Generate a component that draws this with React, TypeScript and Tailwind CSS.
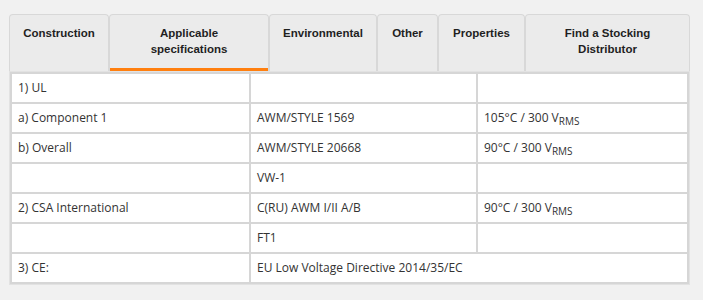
import React from "react";

const tabs = [
  { id: "construction", label: "Construction", w: "w-[100px]" },
  { id: "specs", label: "Applicable specifications", w: "w-[160px]", active: true },
  { id: "env", label: "Environmental", w: "w-[108px]" },
  { id: "other", label: "Other", w: "w-[61px]" },
  { id: "props", label: "Properties", w: "w-[87px]" },
  { id: "dist", label: "Find a Stocking Distributor", w: "w-[165px]" },
];

const Rms = ({ temp }: { temp: string }) => (
  <>
    {temp} / 300 V<sub className="text-[10px]">RMS</sub>
  </>
);

const rows: { a: string; b: string; c?: React.ReactNode; span?: boolean }[] = [
  { a: "1) UL", b: "" },
  { a: "a) Component 1", b: "AWM/STYLE 1569", c: <Rms temp="105°C" /> },
  { a: "b) Overall", b: "AWM/STYLE 20668", c: <Rms temp="90°C" /> },
  { a: "", b: "VW-1" },
  { a: "2) CSA International", b: "C(RU) AWM I/II A/B", c: <Rms temp="90°C" /> },
  { a: "", b: "FT1" },
  { a: "3) CE:", b: "EU Low Voltage Directive 2014/35/EC", span: true },
];

const App = () => {
  return (
    <div className="w-[703px] h-[300px] bg-[#f1f1f1] pt-[14px] pl-[9px]">
      <div className="w-[681px]">
        {/* Tabs */}
        <div className="flex h-[57px]">
          {tabs.map((t) => (
            <div
              key={t.id}
              className={`${t.w} shrink-0 bg-[#ebebeb] border border-b-0 border-[#d8d8d8] rounded-t-[4px] pt-[10px] px-2 text-center text-[11.5px] leading-[16px] font-bold text-[#1f1f1f] ${
                t.active ? "shadow-[inset_0_-3px_0_#ff7f0f]" : ""
              }`}
              style={{ fontFamily: '"Liberation Sans", Arial, sans-serif' }}
            >
              {t.id === "specs" ? (
                <>
                  Applicable
                  <br />
                  specifications
                </>
              ) : t.id === "dist" ? (
                <>
                  Find a Stocking
                  <br />
                  Distributor
                </>
              ) : (
                t.label
              )}
            </div>
          ))}
        </div>

        {/* Table */}
        <div className="border border-[#e2e2e2]">
          <table
            className="w-full border-collapse bg-white text-[12px] text-[#333]"
            style={{ fontFamily: '"Open Sans", sans-serif' }}
          >
            <colgroup>
              <col className="w-[239px]" />
              <col className="w-[227px]" />
              <col />
            </colgroup>
            <tbody>
              {rows.map((r, i) => (
                <tr key={i} className="h-[30px]">
                  <td className="border-2 border-[#d6d6d6] px-[6px] py-0 align-middle">
                    {r.a}
                  </td>
                  {r.span ? (
                    <td
                      colSpan={2}
                      className="border-2 border-[#d6d6d6] px-[6px] py-0 align-middle"
                    >
                      {r.b}
                    </td>
                  ) : (
                    <>
                      <td className="border-2 border-[#d6d6d6] px-[6px] py-0 align-middle">
                        {r.b}
                      </td>
                      <td className="border-2 border-[#d6d6d6] px-[6px] py-0 align-middle">
                        {r.c}
                      </td>
                    </>
                  )}
                </tr>
              ))}
            </tbody>
          </table>
        </div>
      </div>
    </div>
  );
};

export default App;
